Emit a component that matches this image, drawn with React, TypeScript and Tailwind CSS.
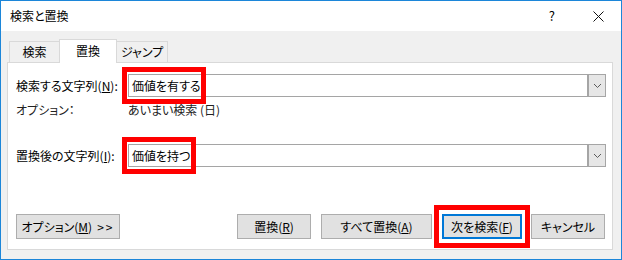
import React from "react"

const font = { fontFamily: '"Noto Sans CJK JP", "Noto Sans", sans-serif' }

function Chevron() {
    return (
        <svg width="9" height="6" viewBox="0 0 9 6">
            <polyline points="1,1 4.5,4.5 8,1" fill="none" stroke="#5a5a5a" strokeWidth="1" />
        </svg>
    )
}

function Combo({ value, redWidth }: { value: string; redWidth: string }) {
    return (
        <div className="relative flex-1 h-[23px] border border-[#a5a5a5] flex items-center bg-white">
            <span className="pl-[3px] flex-1 text-[12px] text-black leading-none">{value}</span>
            <div className="w-[18px] h-full bg-[#e6e6e6] border-l-2 border-[#a5a5a5] flex items-center justify-center">
                <Chevron />
            </div>
            <div className={`absolute left-[-7px] top-[-8px] h-[37px] border-[5px] border-[#ff0000] ${redWidth}`} />
        </div>
    )
}

function Btn({ children, width, primary }: { children: React.ReactNode; width: string; primary?: boolean }) {
    return (
        <div
            className={`${width} h-[25px] flex items-center justify-center bg-[#e1e1e1] text-[12px] text-black ${
                primary ? "border-2 border-[#0078d7]" : "border border-[#adadad]"
            }`}
        >
            {children}
        </div>
    )
}

export default function App() {
    return (
        <div
            style={font}
            className="w-[622px] h-[260px] border border-[#1c86d9] bg-[#f0f0f0] flex flex-col [font-feature-settings:'palt']"
        >
            {/* title bar */}
            <div className="h-[30px] bg-white flex items-center pl-[9px] text-[12px] text-black">
                <span>検索と置換</span>
                <span className="ml-auto mr-[38px] text-[13px]">?</span>
                <svg className="mr-[17px]" width="11" height="11" viewBox="0 0 11 11">
                    <path d="M0.5 0.5 L10.5 10.5 M10.5 0.5 L0.5 10.5" stroke="#111" strokeWidth="1" />
                </svg>
            </div>

            <div className="flex-1 pl-[6px] pr-[8px] pt-[8px]">
                {/* tabs */}
                <div className="relative z-10 -mb-px h-[24px] flex items-end pl-[2px] text-[12px] text-black">
                    <div className="w-[50px] h-[21px] mb-px border-l border-t border-[#d9d9d9] flex items-center justify-center">
                        検索
                    </div>
                    <div className="w-[58px] h-[24px] bg-white border-x border-t border-[#d9d9d9] flex items-center justify-center pb-[1px]">
                        置換
                    </div>
                    <div className="w-[51px] h-[21px] mb-px border-r border-t border-[#d9d9d9] flex items-center justify-center">
                        ジャンプ
                    </div>
                </div>

                {/* panel */}
                <div className="h-[188px] bg-white border border-[#d9d9d9] flex flex-col pl-[8px] pr-[6px] text-[12px] text-black">
                    <div className="mt-[11px] flex items-center">
                        <span className="w-[112px]">
                            検索する文字列(<span className="underline">N</span>):
                        </span>
                        <Combo value="価値を有する" redWidth="w-[84px]" />
                    </div>

                    <div className="mt-[5px] h-[16px] flex items-center text-[#222]">
                        <span className="w-[112px]">オプション：</span>
                        <span>あいまい検索 (日)</span>
                    </div>

                    <div className="mt-[26px] flex items-center">
                        <span className="w-[112px]">
                            置換後の文字列(<span className="underline">I</span>):
                        </span>
                        <Combo value="価値を持つ" redWidth="w-[74px]" />
                    </div>

                    <div className="mt-auto mb-[10px] mr-px flex">
                        <Btn width="w-[104px]">
                            オプション(<span className="underline">M</span>)
                            <span className="ml-[5px] tracking-[2px]">&gt;&gt;</span>
                        </Btn>
                        <div className="ml-auto flex gap-[10px]">
                            <Btn width="w-[74px]">
                                置換(<span className="underline">R</span>)
                            </Btn>
                            <Btn width="w-[111px]">
                                すべて置換(<span className="underline">A</span>)
                            </Btn>
                            <div className="relative">
                                <Btn width="w-[80px]" primary>
                                    次を検索(<span className="underline">F</span>)
                                </Btn>
                                <div className="absolute left-[-8px] top-[-9px] w-[96px] h-[43px] border-[5px] border-[#ff0000]" />
                            </div>
                            <div className="-ml-px">
                                <Btn width="w-[74px]">キャンセル</Btn>
                            </div>
                        </div>
                    </div>
                </div>
            </div>
        </div>
    )
}
